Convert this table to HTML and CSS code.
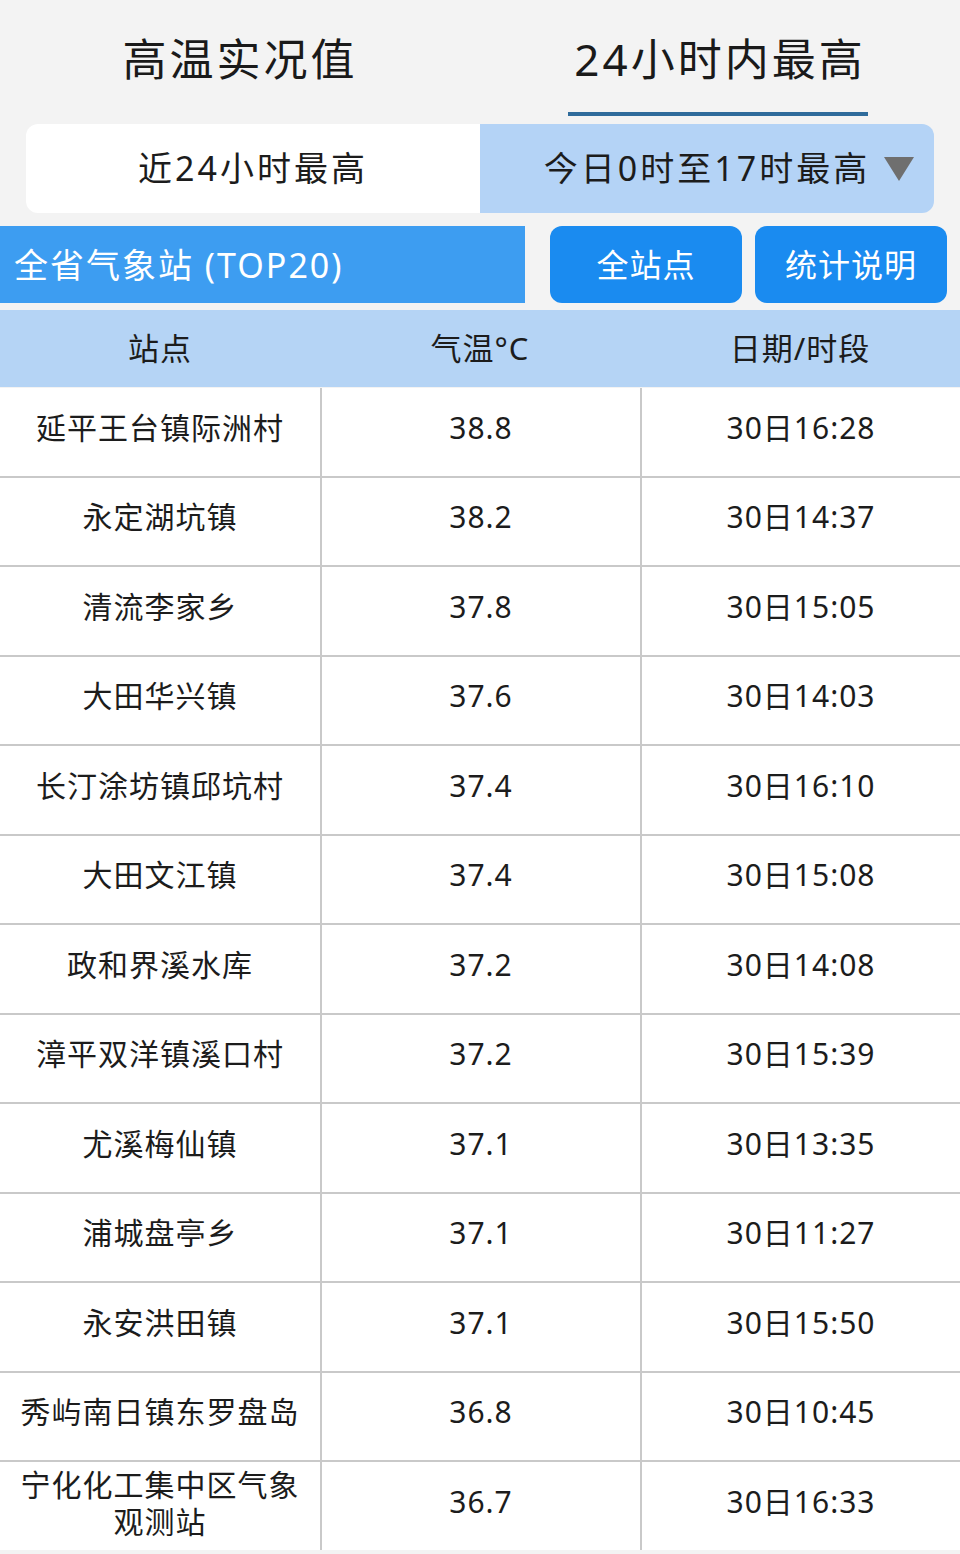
FILE: index.html
```html
<!DOCTYPE html>
<html lang="zh-CN">
<head>
<meta charset="utf-8">
<title>高温实况值</title>
<link rel="stylesheet" href="styles.css">
</head>
<body>
<div class="tabs">
  <div class="tab">高温实况值</div>
  <div class="tab active">24小时内最高</div>
</div>
<div class="segment">
  <div class="seg seg-left">近24小时最高</div>
  <div class="seg seg-right">今日0时至17时最高<span class="caret"></span></div>
</div>
<div class="toolbar">
  <div class="bar-title">全省气象站 (TOP20)</div>
  <div class="btn btn-first">全站点</div>
  <div class="btn">统计说明</div>
</div>
<div class="thead">
  <div>站点</div>
  <div>气温°C</div>
  <div>日期/时段</div>
</div>
<div class="grid">
  <div class="cell">延平王台镇际洲村</div><div class="cell">38.8</div><div class="cell">30日16:28</div>
  <div class="cell">永定湖坑镇</div><div class="cell">38.2</div><div class="cell">30日14:37</div>
  <div class="cell">清流李家乡</div><div class="cell">37.8</div><div class="cell">30日15:05</div>
  <div class="cell">大田华兴镇</div><div class="cell">37.6</div><div class="cell">30日14:03</div>
  <div class="cell">长汀涂坊镇邱坑村</div><div class="cell">37.4</div><div class="cell">30日16:10</div>
  <div class="cell">大田文江镇</div><div class="cell">37.4</div><div class="cell">30日15:08</div>
  <div class="cell">政和界溪水库</div><div class="cell">37.2</div><div class="cell">30日14:08</div>
  <div class="cell">漳平双洋镇溪口村</div><div class="cell">37.2</div><div class="cell">30日15:39</div>
  <div class="cell">尤溪梅仙镇</div><div class="cell">37.1</div><div class="cell">30日13:35</div>
  <div class="cell">浦城盘亭乡</div><div class="cell">37.1</div><div class="cell">30日11:27</div>
  <div class="cell">永安洪田镇</div><div class="cell">37.1</div><div class="cell">30日15:50</div>
  <div class="cell">秀屿南日镇东罗盘岛</div><div class="cell">36.8</div><div class="cell">30日10:45</div>
  <div class="cell two">宁化化工集中区气象<br>观测站</div><div class="cell">36.7</div><div class="cell">30日16:33</div>
</div>
</body>
</html>
```
FILE: styles.css
```css
* { box-sizing: border-box; }
html, body { margin: 0; padding: 0; }
body {
  width: 960px;
  height: 1554px;
  overflow: hidden;
  background: #f3f3f3;
  color: #1c1c1c;
  font-family: "Noto Sans", "Noto Sans CJK SC", sans-serif;
}
.tabs {
  display: flex;
  height: 124px;
}
.tab {
  flex: 1;
  position: relative;
  text-align: center;
  font-size: 44px;
  letter-spacing: 3px;
  line-height: 1;
  padding-top: 37px;
  color: #1a1a1a;
}
.tab.active::after {
  content: "";
  position: absolute;
  left: 88px;
  top: 112px;
  width: 300px;
  height: 4px;
  background: #2f6b9b;
}
.segment {
  display: flex;
  height: 89px;
  margin: 0 26px;
  border-radius: 12px;
  overflow: hidden;
}
.seg {
  flex: 1;
  display: flex;
  align-items: center;
  justify-content: center;
  font-size: 34px;
  letter-spacing: 3px;
  position: relative;
  padding-bottom: 4px;
}
.seg-left {
  flex: 0 0 454px;
  background: #ffffff;
}
.seg-right { background: #b4d3f6; }
.caret {
  position: absolute;
  right: 20px;
  top: 33px;
  width: 0;
  height: 0;
  border-left: 15px solid transparent;
  border-right: 15px solid transparent;
  border-top: 24px solid #6f6f6f;
}
.toolbar {
  display: flex;
  margin-top: 13px;
  height: 77px;
}
.bar-title {
  width: 525px;
  background: #3d9df1;
  color: #fff;
  font-size: 34px;
  letter-spacing: 2px;
  display: flex;
  align-items: center;
  padding-left: 14px;
  padding-bottom: 3px;
}
.btn {
  width: 192px;
  margin-left: 13px;
  background: #1a8bf0;
  color: #fff;
  border-radius: 12px;
  display: flex;
  align-items: center;
  justify-content: center;
  font-size: 32px;
  letter-spacing: 1px;
  padding-bottom: 3px;
}
.btn-first { margin-left: 25px; }
.thead {
  display: grid;
  grid-template-columns: 320px 320px 320px;
  height: 77px;
  margin-top: 7px;
  background: #b5d4f5;
  font-size: 31px;
  letter-spacing: 1px;
}
.thead div {
  display: flex;
  align-items: center;
  justify-content: center;
  padding-bottom: 4px;
}
.grid {
  display: grid;
  grid-template-columns: 320px 318px 318px;
  grid-auto-rows: 87.5px;
  column-gap: 2px;
  row-gap: 2px;
  margin-top: 1px;
  background: #c9c9c9;
}
.cell {
  background: #fff;
  display: flex;
  align-items: center;
  justify-content: center;
  text-align: center;
  font-size: 30px;
  letter-spacing: 1px;
  padding-bottom: 8px;
  line-height: 36px;
}
.cell.two { padding-bottom: 6px; line-height: 37px; }
```
